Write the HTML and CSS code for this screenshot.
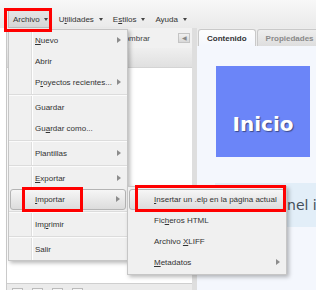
FILE: index.html
```html
<!DOCTYPE html>
<html lang="es">
<head>
    <meta charset="UTF-8">
    <title>eXe - Archivo</title>
    <link rel="stylesheet" href="styles.css">
</head>
<body>
    <div class="app">
        <div class="menubar">
            <span class="mb-item active"><span>Archivo</span><i class="caret"></i></span>
            <span class="mb-item"><span>U<u>t</u>ilidades</span><i class="caret"></i></span>
            <span class="mb-item"><span>E<u>s</u>tilos</span><i class="caret"></i></span>
            <span class="mb-item"><span>Ayuda</span><i class="caret"></i></span>
        </div>

        <div class="workspace">
            <div class="left-panel">
                <div class="lp-toolbar">
                    <span class="rename">Renombrar</span>
                    <span class="collapse">&#9664;</span>
                </div>
                <div class="lp-header"></div>
                <div class="lp-tree"></div>
                <div class="lp-bottom">
                    <span class="tool-btn"></span>
                    <span class="tool-btn"></span>
                    <span class="tool-btn"></span>
                    <span class="tool-btn"></span>
                </div>
            </div>
            <div class="splitter"></div>
            <div class="right-panel">
                <div class="tabs">
                    <span class="tab active">Contenido</span>
                    <span class="tab">Propiedades</span>
                </div>
                <div class="content">
                    <div class="title-box">Inicio</div>
                    <div class="info-box">Use el panel izquierdo</div>
                </div>
            </div>
        </div>

        <!-- Archivo dropdown -->
        <div class="menu main-menu">
            <div class="menu-item has-sub"><span><u>N</u>uevo</span></div>
            <div class="menu-item"><span>Abrir</span></div>
            <div class="menu-item has-sub"><span>P<u>r</u>oyectos recientes...</span></div>
            <div class="sep"></div>
            <div class="menu-item"><span>Guardar</span></div>
            <div class="menu-item"><span>Gu<u>a</u>rdar como...</span></div>
            <div class="sep"></div>
            <div class="menu-item has-sub"><span>Plantillas</span></div>
            <div class="sep"></div>
            <div class="menu-item has-sub"><span><u>E</u>xportar</span></div>
            <div class="menu-item has-sub hover"><span><u>I</u>mportar</span></div>
            <div class="sep"></div>
            <div class="menu-item"><span>Im<u>p</u>rimir</span></div>
            <div class="sep"></div>
            <div class="menu-item"><span>Salir</span></div>
        </div>

        <!-- Importar submenu -->
        <div class="menu sub-menu">
            <div class="menu-item hover"><span><u>I</u>nsertar un .elp en la página actual</span></div>
            <div class="menu-item"><span>Fic<u>h</u>eros HTML</span></div>
            <div class="menu-item"><span>Archivo <u>X</u>LIFF</span></div>
            <div class="menu-item has-sub"><span><u>M</u>etadatos</span></div>
        </div>

        <!-- red highlight marks -->
        <div class="mark mark-archivo"></div>
        <div class="mark mark-importar"></div>
        <div class="mark mark-insertar"></div>
    </div>
</body>
</html>
```

FILE: styles.css
```css
body {
    margin: 0;
    background: #fff;
    font-family: "Liberation Sans", Arial, sans-serif;
    font-size: 8px;
    color: #333;
}
u {
    text-decoration: underline;
}
.app {
    position: relative;
    width: 316px;
    height: 290px;
    overflow: hidden;
}

/* top menu bar */
.menubar {
    height: 28px;
    box-sizing: border-box;
    display: flex;
    align-items: flex-end;
    gap: 3px;
    padding-left: 8px;
    background: linear-gradient(#f8f8f8, #eaeaea);
}
.mb-item {
    height: 18px;
    display: flex;
    align-items: center;
    gap: 5px;
    padding: 0 2px 0 5px;
    box-sizing: border-box;
    white-space: nowrap;
}
.mb-item.active {
    background: linear-gradient(#e4e4e4, #d6d6d6);
    border: 1px solid #bdbdbd;
    padding-left: 4px;
    gap: 4px;
}
.caret {
    width: 0;
    height: 0;
    border-left: 2.5px solid transparent;
    border-right: 2.5px solid transparent;
    border-top: 3px solid #444;
}

/* panels */
.workspace {
    display: flex;
    height: 262px;
    padding-left: 6px;
}
.left-panel {
    width: 186px;
    box-sizing: border-box;
    border-left: 1px solid #cacaca;
    display: flex;
    flex-direction: column;
    background: #fff;
}
.lp-toolbar {
    height: 20px;
    flex-shrink: 0;
    background: #f1f1f1;
    display: flex;
    align-items: center;
    justify-content: flex-end;
    padding-right: 2px;
}
.rename {
    margin-right: 28px;
    color: #444;
}
.collapse {
    width: 12px;
    height: 10px;
    box-sizing: border-box;
    border: 1px solid #c4c4c4;
    background: linear-gradient(#f0f0f0, #d8d8d8);
    color: #888;
    font-size: 6px;
    line-height: 8px;
    text-align: center;
}
.lp-header {
    height: 20px;
    flex-shrink: 0;
    box-sizing: border-box;
    background: linear-gradient(#efefef, #e0e0e0);
    border-bottom: 1px solid #d4d4d4;
}
.lp-tree {
    height: 215px;
    flex-shrink: 0;
}
.lp-bottom {
    height: 20px;
    flex-shrink: 0;
    box-sizing: border-box;
    background: #ebebeb;
    border-top: 1px solid #cfcfcf;
    display: flex;
    gap: 9px;
    padding: 4px 0 0 5px;
}
.tool-btn {
    width: 9px;
    height: 9px;
    border: 1px solid #bbb;
    background: #f6f6f6;
}
.splitter {
    width: 5px;
    background: #dedede;
}
.right-panel {
    flex: 1;
    min-width: 0;
    display: flex;
    flex-direction: column;
}
.tabs {
    height: 18px;
    flex-shrink: 0;
    display: flex;
    align-items: flex-end;
    gap: 1px;
    padding-left: 1px;
    background: #ececec;
}
.tab {
    height: 17px;
    box-sizing: border-box;
    display: flex;
    align-items: center;
    padding: 0 8px;
    border: 1px solid #c9c9c9;
    border-bottom: none;
    border-radius: 3px 3px 0 0;
    font-weight: bold;
    color: #8a8a8a;
    background: linear-gradient(#eeeeee, #dedede);
    white-space: nowrap;
}
.tab.active {
    color: #333;
    background: linear-gradient(#fdfdfd, #f4f7fd);
}
.content {
    flex: 1;
    background: #f4f7fd;
    padding: 20px 0 0 19px;
}
.title-box {
    width: 94px;
    height: 91px;
    box-sizing: border-box;
    padding-top: 46px;
    background: #6b85f8;
    color: #fff;
    font-family: "DejaVu Sans", Verdana, sans-serif;
    font-weight: bold;
    font-size: 20px;
    line-height: 24px;
    text-align: center;
    text-shadow: 1px 1px 1px rgba(0, 0, 0, 0.45);
}
.info-box {
    margin: 26px 0 0 -1px;
    height: 44px;
    display: flex;
    align-items: center;
    padding-left: 7px;
    background: #e2eef8;
    color: #45505a;
    font-family: "DejaVu Sans", Verdana, sans-serif;
    font-size: 14px;
    white-space: nowrap;
}

/* dropdown menus */
.menu {
    position: absolute;
    box-sizing: border-box;
    border: 1px solid #c6c6c6;
    background-color: #f0f0f0;
    box-shadow: 2px 2px 4px rgba(0, 0, 0, 0.28);
}
.main-menu {
    left: 8px;
    top: 29px;
    width: 120px;
    background-image: linear-gradient(to right, transparent 22px, #dedede 22px, #dedede 23px, #fff 23px, #fff 24px, transparent 24px);
}
.sub-menu {
    left: 127px;
    top: 186px;
    width: 160px;
    padding: 2px 0 1px;
}
.menu-item {
    position: relative;
    height: 21px;
    box-sizing: border-box;
    display: flex;
    align-items: center;
    padding-left: 26px;
    white-space: nowrap;
}
.menu-item.has-sub::after {
    content: "";
    position: absolute;
    right: 6px;
    top: 7px;
    border-left: 4px solid #8c8c8c;
    border-top: 3px solid transparent;
    border-bottom: 3px solid transparent;
}
.menu-item.hover {
    margin: 0 1px;
    padding-left: 24px;
    border: 1px solid #b4b4b4;
    border-radius: 3px;
    background: linear-gradient(#f6f6f6, #dcdcdc);
}
.menu-item.hover.has-sub::after {
    right: 5px;
    top: 6px;
}
.sep {
    height: 1px;
    margin: 1px 0;
    background: #dcdcdc;
    border-bottom: 1px solid #fbfbfb;
}

/* red annotation boxes */
.mark {
    position: absolute;
    box-sizing: border-box;
    border: 3px solid #f00;
}
.mark-archivo {
    left: 4px;
    top: 8px;
    width: 48px;
    height: 24px;
}
.mark-importar {
    left: 22px;
    top: 187px;
    width: 61px;
    height: 25px;
}
.mark-insertar {
    left: 135px;
    top: 185px;
    width: 151px;
    height: 27px;
}
```
